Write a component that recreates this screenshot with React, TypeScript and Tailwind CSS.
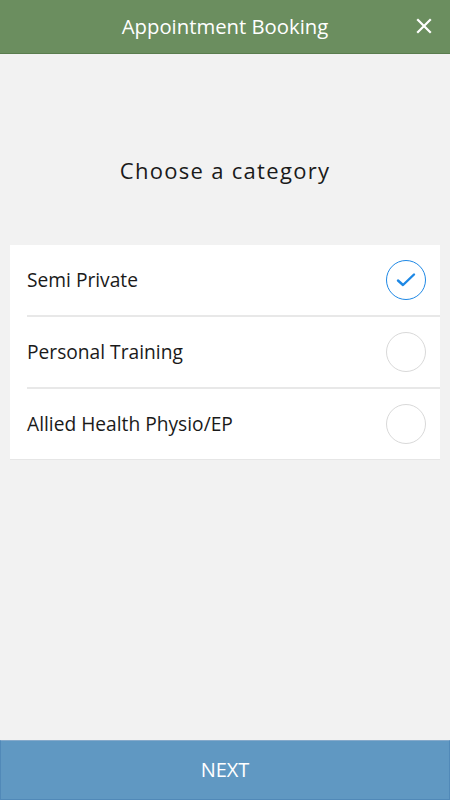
import { useState } from 'react'

const categories = ['Semi Private', 'Personal Training', 'Allied Health Physio/EP']

export default function App() {
  const [selected, setSelected] = useState(0)

  return (
    <div className="flex h-[800px] w-[450px] flex-col bg-[#f2f2f2] font-['Open_Sans',sans-serif]">
      <header className="relative flex h-[54px] shrink-0 items-center justify-center border-b border-[#5a7d4e] bg-[#6b8e5f]">
        <h1 className="text-[20.3px] text-white">Appointment Booking</h1>
        <button className="absolute right-[14px] top-[14px] flex h-6 w-6 items-center justify-center">
          <svg width="16" height="16" viewBox="0 0 16 16" fill="none" stroke="white" strokeWidth="2.2" strokeLinecap="square">
            <path d="M2 2L14 14M14 2L2 14" />
          </svg>
        </button>
      </header>

      <main className="flex-1">
        <h2 className="mt-[100px] text-center text-[22px] tracking-[1.3px] text-[#1a1a1a]">Choose a category</h2>

        <ul className="mx-[10px] mt-[58px] border-b border-[#e6e6e6] bg-white">
          {categories.map((name, i) => (
            <li
              key={name}
              onClick={() => setSelected(i)}
              className={`ml-[17px] flex cursor-pointer items-center justify-between pr-[14px] ${
                i < categories.length - 1 ? 'h-[72px] border-b-2 border-[#e8e8e8]' : 'h-[70px]'
              }`}
            >
              <span className="text-[19.2px] text-[#1a1a1a]">{name}</span>
              {selected === i ? (
                <span className="flex h-[40px] w-[40px] items-center justify-center rounded-full border border-[#1e88e5]">
                  <svg width="20" height="16" viewBox="0 0 20 16" fill="none" stroke="#1e88e5" strokeWidth="2.4" strokeLinecap="round" strokeLinejoin="round">
                    <path d="M2 8.5L7 13L18 2.5" />
                  </svg>
                </span>
              ) : (
                <span className="h-[40px] w-[40px] rounded-full border border-[#d9d9d9]" />
              )}
            </li>
          ))}
        </ul>
      </main>

      <button className="flex h-[60px] shrink-0 items-center justify-center border border-[#5189b8] border-t-[#86aacb] bg-[#6098c2] text-[20px] text-white">
        NEXT
      </button>
    </div>
  )
}
